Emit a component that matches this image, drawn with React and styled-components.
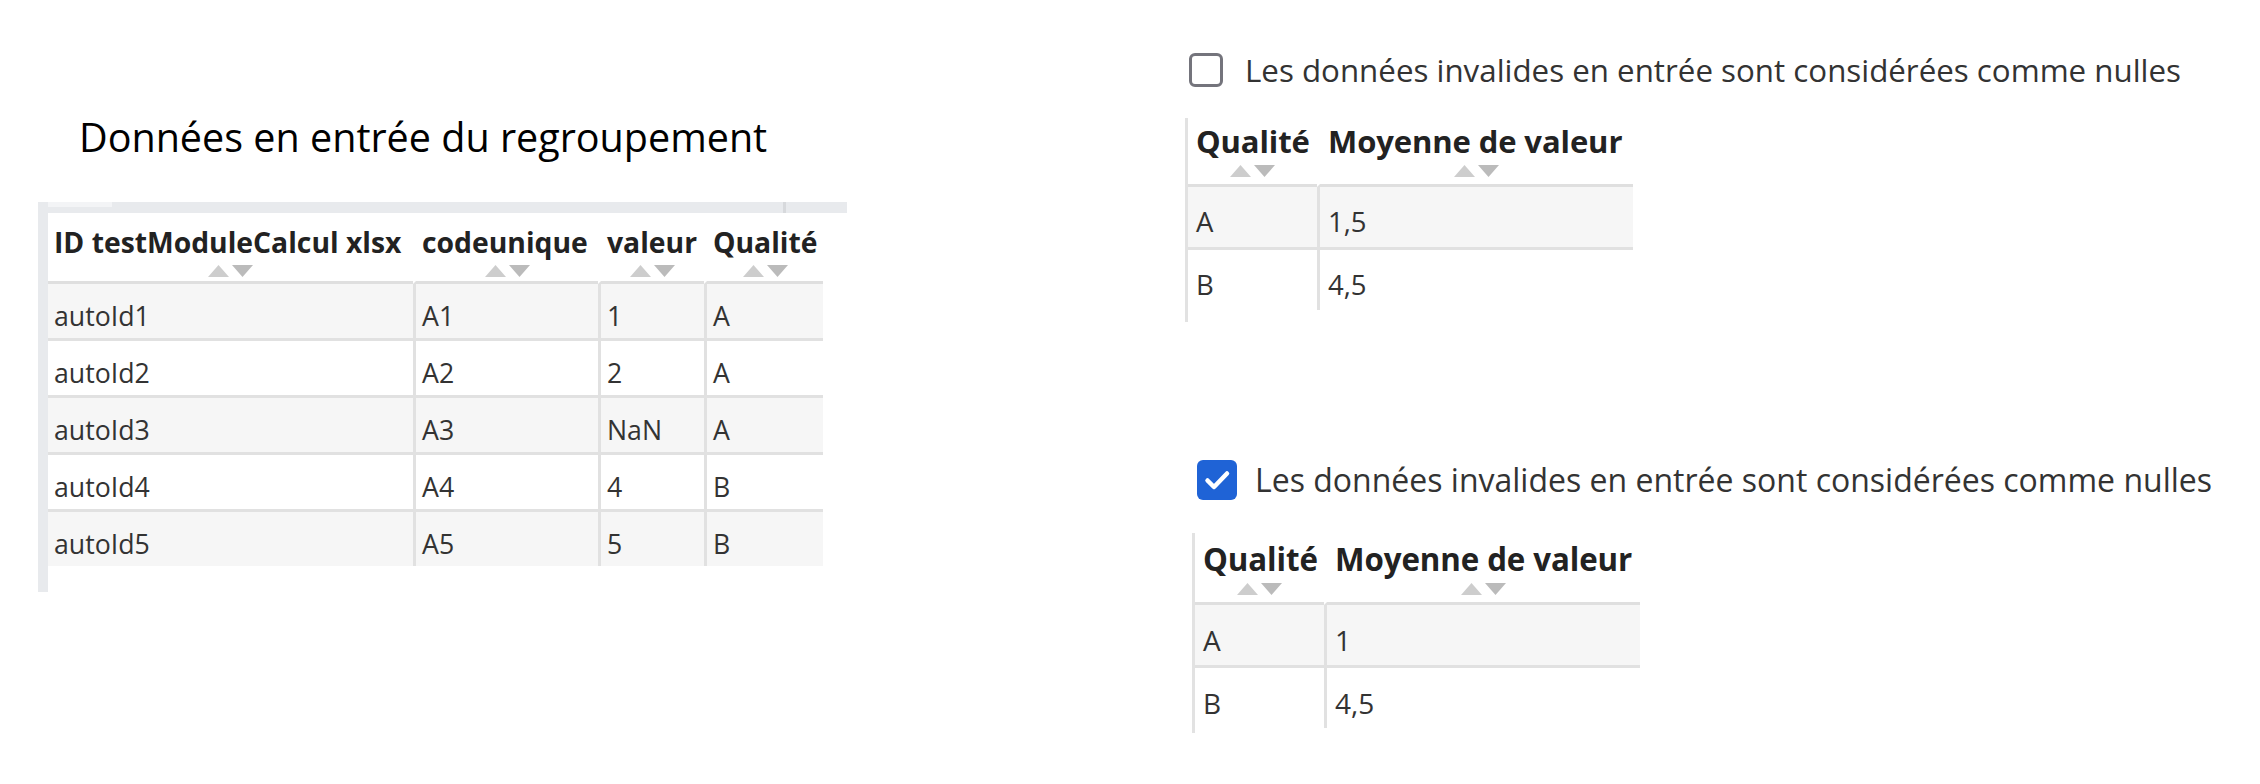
import React from 'react';
import styled, { createGlobalStyle } from 'styled-components';

const GlobalStyle = createGlobalStyle`
  *, *::before, *::after { box-sizing: border-box; }
  html, body { margin: 0; padding: 0; background: #ffffff; }
  body {
    font-family: "Open Sans", "Noto Sans", "DejaVu Sans", sans-serif;
    color: #333333;
  }
`;

const VARIANTS = {
  main: { head: 28.3, headLh: 34, headPadTop: 12, headPadBottom: 4, arrowGap: 6, body: 26.7, bodyPadTop: 10, bodyLh: 44, padX: 6, track: 0 },
  summaryA: { head: 31, headLh: 36, headPadTop: 5, headPadBottom: 7, arrowGap: 6, body: 27.5, bodyPadTop: 10, bodyLh: 50, padX: 8, track: -0.1 },
  summaryB: { head: 31.3, headLh: 36, headPadTop: 8, headPadBottom: 7, arrowGap: 6, body: 28, bodyPadTop: 10, bodyLh: 50, padX: 8, track: -0.1 },
};

const Page = styled.div`
  display: flex;
  align-items: flex-start;
  width: 2260px;
  height: 784px;
  padding-left: 38px;
`;

const LeftPanel = styled.section`
  display: flex;
  flex-direction: column;
  width: 809px;
  flex: none;
  padding-top: 114px;
`;

const Title = styled.h1`
  margin: 0 0 42px 41px;
  font-size: 39.5px;
  line-height: 46px;
  font-weight: 400;
  color: #000000;
  white-space: nowrap;
`;

const Frame = styled.div`
  display: flex;
  flex-direction: column;
  width: 809px;
`;

const FrameTop = styled.div`
  height: 11px;
  background:
    linear-gradient(#f3f4f6, #f3f4f6) 10px 0 / 64px 5px no-repeat,
    linear-gradient(#d7d9dc, #d7d9dc) 745px 0 / 3px 100% no-repeat,
    #e8eaed;
`;

const FrameBody = styled.div`
  height: 379px;
  border-left: 10px solid #e8eaed;
`;

const Grid = styled.table`
  border-collapse: separate;
  border-spacing: 0;
  table-layout: fixed;
  width: ${(p) => p.$width}px;
`;

const HeadCell = styled.th`
  width: ${(p) => p.$w}px;
  padding: ${(p) => VARIANTS[p.$v].headPadTop}px ${(p) => VARIANTS[p.$v].padX}px
    ${(p) => VARIANTS[p.$v].headPadBottom}px;
  border-bottom: 3px solid #dfdfdf;
  text-align: left;
  vertical-align: top;
  font-weight: 700;
  color: #222222;
  background: #ffffff;
  white-space: nowrap;
  & + & { border-left: 3px solid #ffffff; }
`;

const HeadLabel = styled.span`
  display: block;
  font-size: ${(p) => VARIANTS[p.$v].head}px;
  line-height: ${(p) => VARIANTS[p.$v].headLh}px;
  letter-spacing: ${(p) => VARIANTS[p.$v].track}px;
`;

const ArrowsSvg = styled.svg`
  display: block;
  margin: ${(p) => p.$gap}px auto 0;
`;

const BodyRow = styled.tr`
  background: ${(p) => (p.$odd ? '#f6f6f6' : '#ffffff')};
  &:last-child td { border-bottom: 0; }
`;

const BodyCell = styled.td`
  padding: ${(p) => VARIANTS[p.$v].bodyPadTop}px ${(p) => VARIANTS[p.$v].padX}px 0;
  font-size: ${(p) => VARIANTS[p.$v].body}px;
  line-height: ${(p) => VARIANTS[p.$v].bodyLh}px;
  vertical-align: top;
  color: #333333;
  white-space: nowrap;
  border-bottom: 3px solid #e1e1e1;
  & + & { border-left: 3px solid #e1e1e1; }
`;

const RightPanel = styled.section`
  display: flex;
  flex-direction: column;
  margin-left: 338px;
  padding-top: 51px;
`;

const Block = styled.div`
  display: flex;
  flex-direction: column;
  margin-left: ${(p) => p.$indent}px;
  margin-top: ${(p) => p.$top}px;
`;

const CheckRow = styled.label`
  display: flex;
  align-items: center;
  gap: ${(p) => p.$gap}px;
  padding-left: ${(p) => p.$pad}px;
`;

const Box = styled.span`
  flex: none;
  display: flex;
  align-items: center;
  justify-content: center;
  width: ${(p) => p.$size}px;
  height: ${(p) => p.$size}px;
  border-radius: 6px;
  border: ${(p) => (p.$checked ? '0' : '3px solid #74747c')};
  background: ${(p) => (p.$checked ? '#1f63d6' : '#ffffff')};
`;

const LabelText = styled.span`
  font-size: ${(p) => p.$size}px;
  line-height: ${(p) => p.$lh}px;
  color: #333333;
  white-space: nowrap;
`;

const SummaryFrame = styled.div`
  margin-top: ${(p) => p.$top}px;
  border-left: 3px solid #e2e2e2;
  padding-bottom: ${(p) => p.$tail}px;
  align-self: flex-start;
`;

function SortArrows({ gap }) {
  return (
    <ArrowsSvg $gap={gap} width="45" height="12" viewBox="0 0 45 12" aria-hidden="true">
      <polygon points="0,12 10.5,0 21,12" fill="#cdcdcd" />
      <polygon points="24,0 45,0 34.5,12" fill="#bbbbbb" />
    </ArrowsSvg>
  );
}

function DataTable({ v, columns, rows }) {
  const width = columns.reduce((s, c) => s + c.w, 0);
  return (
    <Grid $width={width}>
      <thead>
        <tr>
          {columns.map((c) => (
            <HeadCell key={c.label} $v={v} $w={c.w}>
              <HeadLabel $v={v}>{c.label}</HeadLabel>
              <SortArrows gap={VARIANTS[v].arrowGap} />
            </HeadCell>
          ))}
        </tr>
      </thead>
      <tbody>
        {rows.map((r, i) => (
          <BodyRow key={i} $odd={i % 2 === 0}>
            {r.map((cell, j) => (
              <BodyCell key={j} $v={v}>{cell}</BodyCell>
            ))}
          </BodyRow>
        ))}
      </tbody>
    </Grid>
  );
}

function CheckIcon() {
  return (
    <svg width="40" height="40" viewBox="0 0 40 40" aria-hidden="true">
      <polyline
        points="10.5,20.5 17,27 30,13.5"
        fill="none"
        stroke="#ffffff"
        strokeWidth="4.5"
        strokeLinecap="round"
        strokeLinejoin="round"
      />
    </svg>
  );
}

const LABEL = 'Les données invalides en entrée sont considérées comme nulles';

const mainColumns = [
  { label: 'ID testModuleCalcul xlsx', w: 365 },
  { label: 'codeunique', w: 185 },
  { label: 'valeur', w: 106 },
  { label: 'Qualité', w: 119 },
];

const mainRows = [
  ['autoId1', 'A1', '1', 'A'],
  ['autoId2', 'A2', '2', 'A'],
  ['autoId3', 'A3', 'NaN', 'A'],
  ['autoId4', 'A4', '4', 'B'],
  ['autoId5', 'A5', '5', 'B'],
];

const summaryColumns = [
  { label: 'Qualité', w: 129 },
  { label: 'Moyenne de valeur', w: 316 },
];

export default function App() {
  return (
    <>
      <GlobalStyle />
      <Page>
        <LeftPanel>
          <Title>Données en entrée du regroupement</Title>
          <Frame>
            <FrameTop />
            <FrameBody>
              <DataTable v="main" columns={mainColumns} rows={mainRows} />
            </FrameBody>
          </Frame>
        </LeftPanel>

        <RightPanel>
          <Block $indent={0} $top={0}>
            <CheckRow $gap={22} $pad={4}>
              <Box role="checkbox" aria-checked="false" $size={34} />
              <LabelText $size={31.3} $lh={38}>{LABEL}</LabelText>
            </CheckRow>
            <SummaryFrame $top={29} $tail={12}>
              <DataTable v="summaryA" columns={summaryColumns} rows={[['A', '1,5'], ['B', '4,5']]} />
            </SummaryFrame>
          </Block>

          <Block $indent={7} $top={138}>
            <CheckRow $gap={18} $pad={5}>
              <Box role="checkbox" aria-checked="true" $checked $size={40}>
                <CheckIcon />
              </Box>
              <LabelText $size={32} $lh={40}>{LABEL}</LabelText>
            </CheckRow>
            <SummaryFrame $top={33} $tail={5}>
              <DataTable v="summaryB" columns={summaryColumns} rows={[['A', '1'], ['B', '4,5']]} />
            </SummaryFrame>
          </Block>
        </RightPanel>
      </Page>
    </>
  );
}
